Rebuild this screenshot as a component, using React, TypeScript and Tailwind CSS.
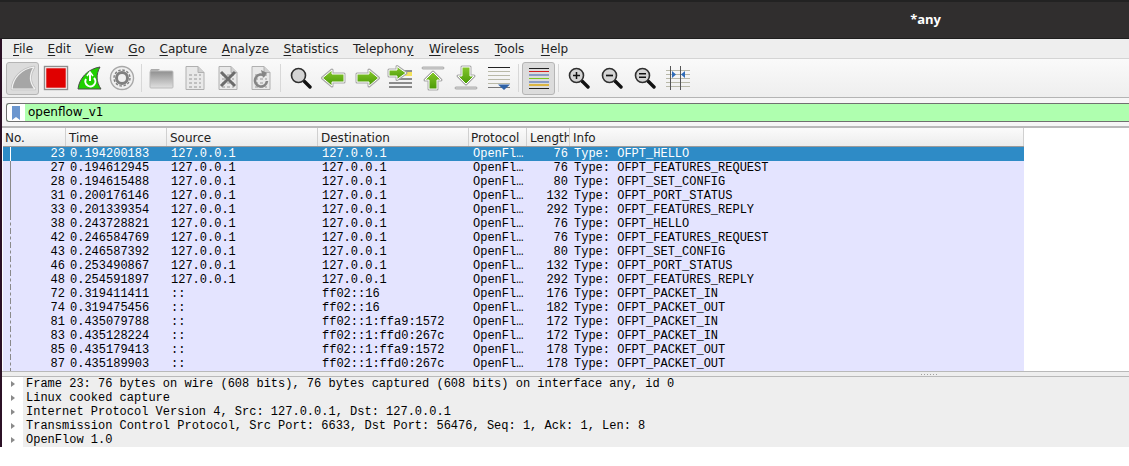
import React from "react";

const menus = [
  ["", "F", "ile", ""], ["", "E", "dit", ""], ["", "V", "iew", ""], ["", "G", "o", ""], ["", "C", "apture", ""], ["", "A", "nalyze", ""],
  ["", "S", "tatistics", ""], ["Telephon", "y", "", ""], ["", "W", "ireless", "ml-[1px]"], ["", "T", "ools", "ml-[1px]"], ["", "H", "elp", "ml-[2px]"],
];

const rows = [
  ["23", "0.194200183", "127.0.0.1", "127.0.0.1", "76", "OFPT_HELLO"],
  ["27", "0.194612945", "127.0.0.1", "127.0.0.1", "76", "OFPT_FEATURES_REQUEST"],
  ["28", "0.194615488", "127.0.0.1", "127.0.0.1", "80", "OFPT_SET_CONFIG"],
  ["31", "0.200176146", "127.0.0.1", "127.0.0.1", "132", "OFPT_PORT_STATUS"],
  ["33", "0.201339354", "127.0.0.1", "127.0.0.1", "292", "OFPT_FEATURES_REPLY"],
  ["38", "0.243728821", "127.0.0.1", "127.0.0.1", "76", "OFPT_HELLO"],
  ["42", "0.246584769", "127.0.0.1", "127.0.0.1", "76", "OFPT_FEATURES_REQUEST"],
  ["43", "0.246587392", "127.0.0.1", "127.0.0.1", "80", "OFPT_SET_CONFIG"],
  ["46", "0.253490867", "127.0.0.1", "127.0.0.1", "132", "OFPT_PORT_STATUS"],
  ["48", "0.254591897", "127.0.0.1", "127.0.0.1", "292", "OFPT_FEATURES_REPLY"],
  ["72", "0.319411411", "::", "ff02::16", "176", "OFPT_PACKET_IN"],
  ["74", "0.319475456", "::", "ff02::16", "182", "OFPT_PACKET_OUT"],
  ["81", "0.435079788", "::", "ff02::1:ffa9:1572", "172", "OFPT_PACKET_IN"],
  ["83", "0.435128224", "::", "ff02::1:ffd0:267c", "172", "OFPT_PACKET_IN"],
  ["85", "0.435179413", "::", "ff02::1:ffa9:1572", "178", "OFPT_PACKET_OUT"],
  ["87", "0.435189903", "::", "ff02::1:ffd0:267c", "178", "OFPT_PACKET_OUT"],
];

const details = [
  "Frame 23: 76 bytes on wire (608 bits), 76 bytes captured (608 bits) on interface any, id 0",
  "Linux cooked capture",
  "Internet Protocol Version 4, Src: 127.0.0.1, Dst: 127.0.0.1",
  "Transmission Control Protocol, Src Port: 6633, Dst Port: 56476, Seq: 1, Ack: 1, Len: 8",
  "OpenFlow 1.0",
];

const headers = [
  ["No.", "w-[63px] pl-[2px]"],
  ["Time", "w-[101px] pl-[3px]"],
  ["Source", "w-[151px] pl-[3px]"],
  ["Destination", "w-[151px] pl-[3px]"],
  ["Protocol", "w-[58px] pl-[2px]"],
  ["Length", "w-[43px] pl-[3px]"],
  ["Info", "w-[454px] pl-[3px]"],
];

function Slot({ children, active }: { children: React.ReactNode; active?: boolean }) {
  return (
    <div className={"flex h-[33px] w-[33px] items-center justify-center rounded-[3px] " + (active ? "border border-[#b5b5b5] bg-[#dcdcdc]" : "")}>
      {children}
    </div>
  );
}

function Sep() {
  return <div className="flex w-[7px] justify-center"><div className="h-[28px] w-px bg-[#d8d8d8]" /></div>;
}

const Svg = ({ children }: { children: React.ReactNode }) => (
  <svg width="26" height="26" viewBox="0 0 26 26" fill="none">{children}</svg>
);

const finPath = "M2 24 C3 13 11 4 24 2 C19 10 19 17 25 24 Z";

const Fin = () => (
  <Svg>
    <path d={finPath} stroke="#bdbdbd" strokeWidth="2.6" strokeLinejoin="round" />
    <path d={finPath} fill="#a6a6a6" stroke="#f2f2f2" strokeWidth="1.2" strokeLinejoin="round" />
  </Svg>
);
const Stop = () => (
  <Svg>
    <rect x="3" y="3" width="20" height="20" fill="#e00000" />
    <rect x="1.5" y="1.5" width="23" height="23" stroke="#8f8f8f" strokeWidth="1.4" />
    <rect x="2.8" y="2.8" width="20.4" height="20.4" stroke="#eedddd" strokeWidth="1" />
  </Svg>
);
const Restart = () => (
  <Svg>
    <path d="M2 24 C3 14 11 4 24 2 C20 9 20 17 25 24 Z" fill="#1fd000" stroke="#4c4c4c" strokeWidth="1" />
    <path d="M10 14 a5 5 0 1 0 8 -1" stroke="#fff" strokeWidth="2" />
    <path d="M14 8 V16" stroke="#fff" strokeWidth="2" />
    <path d="M11 11 L14 7 L17 11" stroke="#fff" strokeWidth="1.5" />
  </Svg>
);
const Gear = () => (
  <Svg>
    <circle cx="13" cy="13" r="11.5" fill="#f0f0f0" stroke="#a8a8a8" strokeWidth="1.4" />
    <circle cx="13" cy="13" r="5.5" stroke="#808080" strokeWidth="3" />
    <circle cx="13" cy="13" r="8" stroke="#808080" strokeWidth="1.4" strokeDasharray="2.5 1.7" />
  </Svg>
);
const Folder = () => (
  <Svg>
    <path d="M1 6 H9 L11 4 H2 Z" fill="#ababab" />
    <rect x="1" y="6" width="23" height="17" rx="1" fill="url(#fg)" stroke="#bbbbbb" />
    <defs>
      <linearGradient id="fg" x1="0" y1="0" x2="0" y2="1">
        <stop offset="0" stopColor="#8f8f8f" />
        <stop offset="1" stopColor="#e0e0e0" />
      </linearGradient>
    </defs>
  </Svg>
);
const Page = ({ children }: { children?: React.ReactNode }) => (
  <>
    <path d="M4 1.5 H16 L22 7.5 V24.5 H4 Z" fill="#e9e9e9" stroke="#b0b0b0" />
    <path d="M16 1.5 V7.5 H22" fill="#d0d0d0" stroke="#b0b0b0" />
    <path d="M7 10 h3 m2 0 h3 m2 0 h2 M7 14 h3 m2 0 h3 m2 0 h2 M7 18 h3 m2 0 h3 m2 0 h2 M7 22 h3 m2 0 h3 m2 0 h2" stroke="#c0c0c0" strokeWidth="2" />
    {children}
  </>
);
const FileIcon = () => <Svg><Page /></Svg>;
const CloseIcon = () => (
  <Svg>
    <Page>
      <path d="M6 7 L20 21 M20 7 L6 21" stroke="#6c6c6c" strokeWidth="3" />
    </Page>
  </Svg>
);
const Reload = () => (
  <Svg>
    <Page>
      <path d="M17 11 A6 6 0 1 0 19 16" stroke="#858585" strokeWidth="2.6" />
      <path d="M13 5 L19 8 L15 13 Z" fill="#858585" />
    </Page>
  </Svg>
);
const Glass = ({ children }: { children?: React.ReactNode }) => (
  <svg width="22" height="22" viewBox="0 0 22 22" fill="none">
    <path d="M14 14 L20 20" stroke="#111" strokeWidth="3.4" strokeLinecap="round" />
    <circle cx="8.5" cy="8.5" r="7" fill="#d4d4d4" stroke="#2f2f2f" strokeWidth="1.6" />
    {children}
  </svg>
);
const Arrow = ({ d }: { d: string }) => (
  <>
    <path d={d} stroke="#a9a9a9" strokeWidth="3" strokeLinejoin="round" />
    <path d={d} fill="url(#ag)" stroke="#ffffff" strokeWidth="1" strokeLinejoin="round" />
  </>
);
const Back = () => (
  <Svg>
    <Arrow d="M1.5 13 L11 5 V9 H23 V17 H11 V21 Z" />
  </Svg>
);
const Forward = () => (
  <Svg>
    <Arrow d="M24.5 13 L15 5 V9 H3 V17 H15 V21 Z" />
  </Svg>
);
const Goto = () => (
  <Svg>
    <path d="M2 6 H25 M2 18 H25 M2 22 H25" stroke="#222" strokeWidth="1" />
    <path d="M12 14 H25" stroke="#222" strokeWidth="1" />
    <rect x="18" y="7" width="7" height="4" fill="#f5e35c" />
    <Arrow d="M2 5 H10 V1.5 L19 8 L10 14.5 V11 H2 Z" />
  </Svg>
);
const First = () => (
  <Svg>
    <rect x="2" y="2" width="22" height="2" rx="1" fill="#dcdcdc" stroke="#8f8f8f" strokeWidth=".7" />
    <Arrow d="M13 7 L21 15 H17 V24 H9 V15 H5 Z" />
  </Svg>
);
const Last = () => (
  <Svg>
    <rect x="2" y="22" width="22" height="2" rx="1" fill="#dcdcdc" stroke="#8f8f8f" strokeWidth=".7" />
    <Arrow d="M13 19 L21 11 H17 V2 H9 V11 H5 Z" />
  </Svg>
);
const AutoScroll = () => (
  <Svg>
    <path d="M2 2.5 H24" stroke="#222" />
    <path d="M2 6.5 H24 M2 10.5 H24 M2 14.5 H24 M2 18.5 H24" stroke="#b9b9a8" strokeWidth="1.2" />
    <path d="M2 22.5 H24" stroke="#777" />
    <path d="M12 19.5 H24 L18 25 Z" fill="#2f62a8" />
  </Svg>
);
const Colorize = () => (
  <Svg>
    <path d="M3 3.5 H23" stroke="#222" />
    <path d="M3 6.5 H23" stroke="#d42020" />
    <path d="M3 10 H23" stroke="#3a5fb0" />
    <path d="M3 13.5 H23" stroke="#7cc520" />
    <path d="M3 17 H23" stroke="#3a5fb0" />
    <path d="M3 20 H23" stroke="#d8a400" strokeWidth="1.4" />
    <path d="M3 23.5 H23" stroke="#222" />
  </Svg>
);
const ResizeCols = () => (
  <Svg>
    <path d="M1 5.5 H25 M1 9.5 H25 M1 13.5 H25 M1 17.5 H25 M1 21.5 H25" stroke="#b8b8a8" />
    <path d="M5.5 1 V25 M15.5 1 V25" stroke="#555" strokeWidth="1" />
    <path d="M7 6 L11 9.5 L7 13 Z M20 6 L16 9.5 L20 13 Z" fill="#2f6cb8" />
  </Svg>
);

export default function App() {
  return (
    <div className="h-[466px] w-[1129px] overflow-hidden bg-white font-['DejaVu_Sans',sans-serif] text-black">
      <svg width="0" height="0" className="absolute">
        <defs>
          <linearGradient id="ag" x1="0" y1="0" x2="0" y2="1">
            <stop offset="0" stopColor="#86c82c" />
            <stop offset="1" stopColor="#4a9a06" />
          </linearGradient>
        </defs>
      </svg>
      {/* title bar */}
      <div className="flex h-[39px] items-center justify-end border-t-2 border-b border-t-[#222222] border-b-[#1e1e1e] bg-[#302e2e] pr-[188px]">
        <span className="font-['Open_Sans',sans-serif] text-[13px] font-bold text-white">*any</span>
      </div>

      <div className="border-l-2 border-l-[#2c1126]">
        {/* menu */}
        <div className="flex h-[20px] items-center gap-[14.5px] border-b border-b-[#d4d4d4] bg-[#eeeeee] pl-[11px] text-[12px] text-[#222222]">
          {menus.map(([before, u, rest, extra]) => (
            <span key={before + u} className={extra}>
              {before}
              <span className="underline underline-offset-2">{u}</span>
              {rest}
            </span>
          ))}
        </div>

        {/* toolbar */}
        <div className="flex h-[39px] items-center border-b border-b-[#b4b4b4] bg-gradient-to-b from-[#fafafa] to-[#eeeeee] pl-[4px]">
          <Slot active><Fin /></Slot>
          <Slot><Stop /></Slot>
          <Slot><Restart /></Slot>
          <Slot><Gear /></Slot>
          <Sep />
          <Slot><Folder /></Slot>
          <Slot><FileIcon /></Slot>
          <Slot><CloseIcon /></Slot>
          <Slot><Reload /></Slot>
          <Sep />
          <Slot><Glass /></Slot>
          <Slot><Back /></Slot>
          <Slot><Forward /></Slot>
          <Slot><Goto /></Slot>
          <Slot><First /></Slot>
          <Slot><Last /></Slot>
          <Slot><AutoScroll /></Slot>
          <Sep />
          <Slot active><Colorize /></Slot>
          <Sep />
          <Slot><Glass><path d="M5 8.5 H12 M8.5 5 V12" stroke="#111" strokeWidth="1.5" /></Glass></Slot>
          <Slot><Glass><path d="M5 8.5 H12" stroke="#111" strokeWidth="1.7" /></Glass></Slot>
          <Slot><Glass><path d="M5 6.8 H12 M5 10.2 H12" stroke="#111" strokeWidth="1.5" /></Glass></Slot>
          <Slot><ResizeCols /></Slot>
        </div>

        {/* display filter */}
        <div className="h-[30px] border-b-2 border-b-[#b9b9b9] bg-[#f6f6f6] pt-[5px]">
          <div className="ml-[4px] flex h-[19px] items-stretch rounded-l-[3px] border border-r-0 border-[#707070] bg-[#afffaf]">
            <div className="flex w-[18px] items-center justify-center rounded-l-[3px] bg-white">
              <svg width="8" height="14" viewBox="0 0 8 14"><path d="M0 0 H8 V14 L4 11 L0 14 Z" fill="#6b96cf" /></svg>
            </div>
            <span className="pl-[3px] text-[12px] leading-[17px]">openflow_v1</span>
          </div>
        </div>

        {/* packet list */}
        <div className="h-[243px] w-[1022px] border-l border-l-white bg-[#e4e4ff]">
          <div className="flex h-[19px] border-b border-b-[#9a9a9a] bg-gradient-to-b from-[#fbfbfb] to-[#ececec] text-[12px] text-[#222222]">
            {headers.map(([label, width]) => (
              <div key={label} className={"overflow-hidden border-r border-r-[#d0d0d0] whitespace-nowrap leading-[20px] " + width}>
                {label}
              </div>
            ))}
          </div>
          <div className="font-['Liberation_Mono',monospace] text-[12px]">
            {rows.map((r, i) => (
              <div key={r[0]} className={"flex h-[14px] items-center leading-[14px] whitespace-pre " + (i === 0 ? "bg-[#2e8bc6] text-white" : "text-black")}>
                <div className="relative w-[63px] pr-[1px] text-right">
                  <span className={"absolute left-[7px] top-0 h-[14px] w-px " + (i === 0 ? "bg-white" : i < 5 ? "bg-[#8a8a8a]" : "border-l border-dashed border-l-[#8a8a8a]")} />
                  {r[0]}
                </div>
                <div className="w-[101px] pl-[4px]">{r[1]}</div>
                <div className="w-[151px] pl-[4px]">{r[2]}</div>
                <div className="w-[151px] pl-[4px]">{r[3]}</div>
                <div className="w-[58px] pl-[4px]">OpenFl…</div>
                <div className="w-[43px] pr-[2px] text-right">{r[4]}</div>
                <div className="pl-[4px]">Type: {r[5]}</div>
              </div>
            ))}
          </div>
        </div>

        {/* splitter */}
        <div className="flex h-[6px] items-center justify-center gap-[2px] border-y border-y-[#b9b9b9] bg-[#eeeeee] pl-[726px]">
          {[0, 1, 2, 3, 4, 5].map((d) => (
            <span key={d} className="h-px w-px bg-[#a0a0a0]" />
          ))}
        </div>

        {/* packet details */}
        <div className="font-['Liberation_Mono',monospace] text-[12px]">
          {details.map((line) => (
            <div key={line} className="flex h-[14px] items-center leading-[14px]">
              <div className="flex w-[21px] justify-center pl-[1px]">
                <span className="h-0 w-0 border-y-[3.5px] border-l-[4px] border-y-transparent border-l-[#8a8a8a]" />
              </div>
              <div className="flex-1 bg-[#eeeeee] pl-[3px] whitespace-pre">{line}</div>
            </div>
          ))}
        </div>
      </div>
    </div>
  );
}
